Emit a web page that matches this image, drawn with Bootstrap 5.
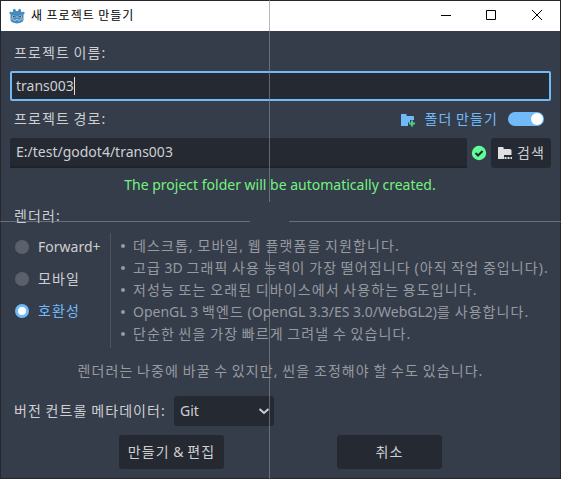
<!DOCTYPE html>
<html lang="ko">
<head>
<meta charset="utf-8">
<meta name="viewport" content="width=device-width, initial-scale=1">
<title>새 프로젝트 만들기</title>
<link href="https://cdn.jsdelivr.net/npm/bootstrap@5.3.0/dist/css/bootstrap.min.css" rel="stylesheet">
<style>
body{width:561px;height:479px;overflow:hidden;background:#363d4a;font:14px/22px "Noto Sans","Noto Sans CJK KR",sans-serif;color:#cdcfd2}
.dlg{width:561px;height:479px;border:1px solid #26282d;background:#363d4a}
.ko{letter-spacing:1.1px;word-spacing:-1.1px;font-weight:400;font-family:"Noto Sans","Noto Sans CJK KR",sans-serif}
.titlebar{height:30px;background:#fff;color:#000;font-size:12px}
.titlebar .ko{letter-spacing:1px;word-spacing:-.6px}
.app-icon{margin:0 6px 0 8px}
.wbtn{width:46px;height:30px}
.content-area{padding:0 9px}
.cap{height:22px;padding-left:4px}
.name-label{margin:11px 0 7px}
.path-row{margin:7px 0 8px}
.field{height:30px;background:#252932;color:#cdcfd2;font-size:14px;line-height:20px;padding:0 6px;border:0;border-bottom:2px solid #1e2229;border-radius:2px 2px 0 0}
.field.on{height:30px;border:2px solid #70bafa;border-radius:2px;padding:0 4px}
.path-field{width:457px}
.caret{width:1px;height:18px;background:#e0e0e0}
.blue{color:#70bafa}
.toggle{width:36px;height:14px;border-radius:7px;background:#70bafa;padding:1px;margin-left:10px}
.toggle i{width:12px;height:12px;border-radius:50%;background:#fff}
.dark-btn{background:#252932;color:#cdcfd2;border:0;border-radius:3px;padding:0;font-size:14px;line-height:20px}
.browse{width:60px;height:30px}
.git{width:100px;height:30px;padding:0 3px 0 6px}
.wide{width:105px;height:34px}
.ok-line{color:#73f280;height:22px;margin:6px 0 9px;padding-right:1px}
.renderer{height:120px;margin-top:4px}
.opt{height:32px;gap:9px}
.dot{width:14px;height:14px;border-radius:50%;background:#5b606b}
.dot.on{background:#fff;border:3px solid #70bafa}
.opts{width:100px;padding-left:5px}
.notes{color:#969aa1;border-left:1px solid #4e545f;height:115px;margin:2px 0 0;padding:0 0 0 11px;white-space:nowrap}
.notes li{height:22px;display:flex;align-items:center;position:relative;top:2px}
.notes li::before{content:"";width:4px;height:4px;border-radius:50%;background:#969aa1;margin:0 8px 0 -1px;flex:none}
.dim{color:#969aa1}
.foot-note{margin:9px 0 14px}
.guide{position:absolute;background:rgba(139,141,145,.62);pointer-events:none}
.g1{left:269px;top:0;width:1px;height:202px}
.g2{left:269px;top:241px;width:1px;height:238px}
.g3{left:0;top:221px;width:250px;height:1px}
.g4{left:289px;top:221px;width:272px;height:1px}
</style>
<script src="https://cdn.jsdelivr.net/npm/bootstrap@5.3.0/dist/js/bootstrap.bundle.min.js"></script>
</head>
<body>
<div class="dlg d-flex flex-column">
  <header class="titlebar d-flex align-items-center">
    <svg class="app-icon flex-shrink-0" width="16" height="16" viewBox="0 0 16 16"><path fill="#478cbf" d="M6 .8 7.100 3h1.800L10 .8l2 .7v2l1.300.8 1.400-.9 1.200 1.700-1.400 1.500v5.200c0 2-3 3.600-6.500 3.600S1.500 13.800 1.500 11.800V6.600L.1 5.100l1.200-1.700 1.400.9L4 3.500v-2z"/><circle cx="4.700" cy="8.400" r="1.500" fill="#c4daea"/><circle cx="11.300" cy="8.400" r="1.500" fill="#c4daea"/><circle cx="4.900" cy="8.500" r="1" fill="#414042"/><circle cx="11.100" cy="8.500" r="1" fill="#414042"/><path d="M8 8v2M1.600 10.900l3.200.4.3 1.300h1.500l.3-1.100h2.200l.3 1.100h1.500l.3-1.300 3.200-.4" fill="none" stroke="#b4d2e6" stroke-width=".8"/></svg>
    <span class="ko">새 프로젝트 만들기</span>
    <div class="d-flex ms-auto">
      <svg class="wbtn" viewBox="0 0 46 30"><path d="M19 14.500h10" stroke="#000"/></svg>
      <svg class="wbtn" viewBox="0 0 46 30"><path d="M18.500 9.500h9v9h-9z" stroke="#000" fill="none"/></svg>
      <svg class="wbtn" viewBox="0 0 46 30"><path d="m18 9 10 10m0-10-10 10" stroke="#000"/></svg>
    </div>
  </header>
  <main class="content-area d-flex flex-column">
    <label class="cap ko name-label">프로젝트 이름:</label>
    <div class="field on d-flex align-items-center"><span>trans003</span><i class="caret"></i></div>
    <div class="cap path-row d-flex align-items-center">
      <span class="ko">프로젝트 경로:</span>
      <div class="d-flex align-items-center ms-auto blue" style="padding-right:7px">
        <svg class="mt-1 me-2" width="16" height="16" viewBox="0 0 16 16"><path fill="#70bafa" d="M1 1.500q0-.5.500-.5H6q.6 0 .6.600V3H13q1 0 1 1v3h-4v2.500H8V13H1z"/><path d="M12 7.500v6M9 10.500h6" stroke="#45d08a" stroke-width="2"/></svg>
        <span class="ko">폴더 만들기</span>
        <span class="toggle d-flex justify-content-end"><i></i></span>
      </div>
    </div>
    <div class="d-flex align-items-center">
      <div class="field path-field d-flex align-items-center">E:/test/godot4/trans003</div>
      <svg class="mx-1" width="16" height="16" viewBox="0 0 16 16"><circle cx="8" cy="8" r="7.200" fill="#5fff97"/><path d="m4.500 8 2.500 2.500L11.600 6" fill="none" stroke="#252932" stroke-width="2"/></svg>
      <button class="dark-btn browse btn d-flex align-items-center justify-content-center"><svg class="me-1" width="16" height="16" viewBox="0 0 16 16"><path fill="#e0e0e0" d="M1 2.500q0-.5.500-.5H6q.6 0 .6.600V4H13q1.500 0 1.500 1.500V10H7v4H1z"/><path d="M7.500 13H15" stroke="#e0e0e0" stroke-width="2" stroke-dasharray="2 1"/></svg><span class="ko">검색</span></button>
    </div>
    <div class="ok-line text-center">The project folder will be automatically created.</div>
    <div class="cap ko">렌더러:</div>
    <div class="renderer d-flex">
      <div class="opts">
        <div class="opt d-flex align-items-center"><i class="dot"></i><span>Forward+</span></div>
        <div class="opt d-flex align-items-center"><i class="dot"></i><span class="ko">모바일</span></div>
        <div class="opt d-flex align-items-center blue"><i class="dot on"></i><span class="ko">호환성</span></div>
      </div>
      <ul class="notes list-unstyled">
        <li><span class="ko">데스크톱, 모바일, 웹 플랫폼을 지원합니다.</span></li>
        <li><span><span class="ko">고급 </span>3D <span class="ko">그래픽 사용 능력이 가장 떨어집니다 (아직 작업 중입니다).</span></span></li>
        <li><span class="ko">저성능 또는 오래된 디바이스에서 사용하는 용도입니다.</span></li>
        <li><span>OpenGL 3 <span class="ko">백엔드 </span>(OpenGL 3.3/ES 3.0/WebGL2)<span class="ko">를 사용합니다.</span></span></li>
        <li><span class="ko">단순한 씬을 가장 빠르게 그려낼 수 있습니다.</span></li>
      </ul>
    </div>
    <div class="dim ko foot-note text-center">렌더러는 나중에 바꿀 수 있지만, 씬을 조정해야 할 수도 있습니다.</div>
    <div class="d-flex align-items-center" style="padding-left:4px">
      <span class="ko" style="width:160px">버전 컨트롤 메타데이터:</span>
      <button class="dark-btn git btn d-flex align-items-center justify-content-between">Git<svg width="14" height="14" viewBox="0 0 14 14"><path d="m2.500 5 4.500 4 4.500-4" fill="none" stroke="#cdcfd2" stroke-width="2"/></svg></button>
    </div>
    <div class="d-flex" style="margin-top:9px;padding-left:109px;gap:113px">
      <button class="dark-btn wide btn"><span class="ko">만들기 </span>&amp; <span class="ko">편집</span></button>
      <button class="dark-btn wide btn"><span class="ko">취소</span></button>
    </div>
  </main>
</div>
<div class="guide g1"></div><div class="guide g2"></div><div class="guide g3"></div><div class="guide g4"></div>
</body>
</html>
